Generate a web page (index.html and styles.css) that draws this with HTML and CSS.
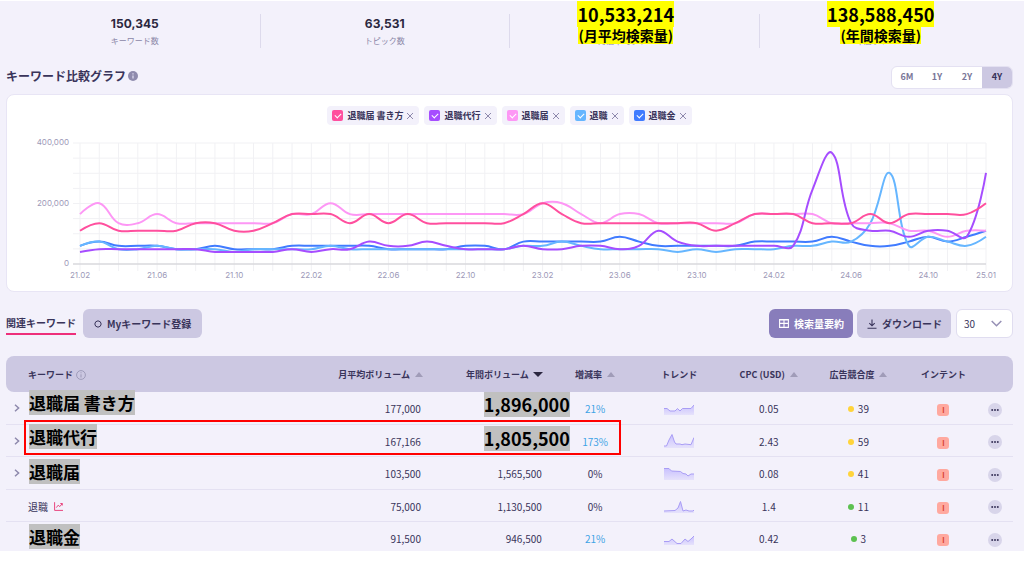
FILE: index.html
```html
<!DOCTYPE html>
<html lang="ja">
<head>
<meta charset="utf-8">
<title>キーワード</title>
<link rel="stylesheet" href="styles.css">
</head>
<body>
<svg class="defs" width="0" height="0" aria-hidden="true">
  <defs>
    <linearGradient id="fade" x1="0" y1="0" x2="0" y2="1"><stop offset="0" stop-color="#c9c1ff"/><stop offset="1" stop-color="#e6e2fb"/></linearGradient>
    <symbol id="chev" viewBox="0 0 6 8"><path d="M1 .8 4.6 4 1 7.2" fill="none" stroke="#8d88ac" stroke-width="1.5"/></symbol>
    <symbol id="x" viewBox="0 0 8 8"><path d="M1 1l6 6M7 1 1 7" stroke="#8d88ac" stroke-width="1" fill="none"/></symbol>
    <symbol id="dots" viewBox="0 0 14 14"><g fill="#39345a"><circle cx="4.2" cy="7" r="1"/><circle cx="7" cy="7" r="1"/><circle cx="9.8" cy="7" r="1"/></g></symbol>
  </defs>
</svg>
<main class="app">
  <section class="stats">
    <div class="stat"><strong>150,345</strong><span>キーワード数</span></div>
    <div class="stat"><strong>63,531</strong><span>トピック数</span></div>
    <div class="stat"><strong></strong><span>月間平均ボリューム</span>
      <div class="callout callout-left"><mark class="big">10,533,214</mark><mark class="small">(月平均検索量)</mark></div></div>
    <div class="stat"><strong></strong><span>年間ボリューム</span>
      <div class="callout"><mark class="big">138,588,450</mark><mark class="small">(年間検索量)</mark></div></div>
  </section>

  <section class="graph">
    <header class="graph-head">
      <h2>キーワード比較グラフ</h2>
      <svg class="info" width="10" height="10" viewBox="0 0 10 10"><circle cx="5" cy="5" r="5" fill="#8f8bad"/><path d="M5 2.2v1.2M5 4.4v3.2" stroke="#dcd9ee" stroke-width="1.3"/></svg>
      <div class="range">
        <button>6M</button><button>1Y</button><button>2Y</button><button class="on">4Y</button>
      </div>
    </header>
    <div class="card">
      <div class="legend">
        <div class="chip"><label><input type="checkbox" class="hot" checked>退職届 書き方</label><button aria-label="削除"><svg width="8" height="8"><use href="#x"/></svg></button></div>
        <div class="chip"><label><input type="checkbox" class="purple" checked>退職代行</label><button aria-label="削除"><svg width="8" height="8"><use href="#x"/></svg></button></div>
        <div class="chip"><label><input type="checkbox" class="pink" checked>退職届</label><button aria-label="削除"><svg width="8" height="8"><use href="#x"/></svg></button></div>
        <div class="chip"><label><input type="checkbox" class="sky" checked>退職</label><button aria-label="削除"><svg width="8" height="8"><use href="#x"/></svg></button></div>
        <div class="chip"><label><input type="checkbox" class="blue" checked>退職金</label><button aria-label="削除"><svg width="8" height="8"><use href="#x"/></svg></button></div>
      </div>
      <svg id="chart" class="chart"></svg>
    </div>
  </section>

  <section class="toolbar">
    <a class="tab" href="#related">関連キーワード</a>
    <button class="btn"><svg width="8" height="8" viewBox="0 0 8 8"><path d="M4 .8 6.3 1.8 7.2 4 6.3 6.2 4 7.2 1.7 6.2 .8 4 1.7 1.8z" fill="none" stroke="#39345a"/></svg>Myキーワード登録</button>
    <span class="spacer"></span>
    <button class="btn primary"><svg width="10" height="9" viewBox="0 0 10 9"><path d="M.6.6h8.8v7.8H.6zM.6 4.4h8.8M5 .6v7.8M.6 1h8.8" fill="none" stroke="#fff" stroke-width="1.1"/></svg>検索量要約</button>
    <button class="btn download"><svg width="10" height="10" viewBox="0 0 10 10"><path d="M5 .4v6.2M2.3 4.2 5 6.8l2.7-2.6M.5 9.2h9" fill="none" stroke="#39345a" stroke-width="1.1"/></svg>ダウンロード</button>
    <div class="select"><select aria-label="表示件数"><option>30</option></select><svg width="11" height="7" viewBox="0 0 11 7"><path d="M.7.9 5.5 5.8 10.3.9" fill="none" stroke="#9690b5" stroke-width="1.5"/></svg></div>
  </section>

  <section class="table-wrap" id="related">
    <table>
      <colgroup><col class="c-name"><col class="c-avg"><col class="c-year"><col class="c-rate"><col class="c-wide"><col class="c-cpc"><col class="c-wide"><col class="c-intent"><col class="c-more"></colgroup>
      <thead>
        <tr>
          <th class="name">キーワード<svg class="info-line" width="10" height="10" viewBox="0 0 10 10"><circle cx="5" cy="5" r="4.4" fill="none" stroke="#9b97b6" stroke-width=".9"/><path d="M5 2.3v1M5 4.3v3.2" stroke="#9b97b6"/></svg></th>
          <th class="avg">月平均ボリューム<i class="up"></i></th>
          <th class="year">年間ボリューム<i class="down"></i></th>
          <th>増減率<i class="up"></i></th>
          <th>トレンド</th>
          <th>CPC (USD)<i class="up"></i></th>
          <th>広告競合度<i class="up"></i></th>
          <th>インテント</th>
          <th></th>
        </tr>
      </thead>
      <tbody>
        <tr>
          <td class="name"><svg class="chev" width="6" height="8"><use href="#chev"/></svg><mark class="note note-up">退職届 書き方</mark></td>
          <td class="avg">177,000</td><td class="year"><mark class="value">1,896,000</mark></td><td class="gain">21%</td>
          <td><svg class="spark" width="30" height="16"><path class="area" d="M0 7.5H3L6 10H11L13.5 7.5 16 10 18.5 7.5H27L30 4V14H0z"/><path class="line" d="M0 7.5H3L6 10H11L13.5 7.5 16 10 18.5 7.5H27L30 4"/></svg></td>
          <td>0.05</td><td><i class="dot"></i>39</td><td><span class="intent">I</span></td><td><button class="more" aria-label="メニュー"><svg width="14" height="14"><use href="#dots"/></svg></button></td>
        </tr>
        <tr>
          <td class="name"><svg class="chev" width="6" height="8"><use href="#chev"/></svg><mark class="note note-mid">退職代行</mark></td>
          <td class="avg">167,166</td><td class="year"><mark class="value value-low">1,805,500</mark></td><td class="gain">173%</td>
          <td><svg class="spark" width="30" height="16"><path class="area" d="M0 12H2.5L5 6 8 .5 10.5 8 12 10H16L18 10.7 21 10 27 10.7 30 3.5V14H0z"/><path class="line" d="M0 12H2.5L5 6 8 .5 10.5 8 12 10H16L18 10.7 21 10 27 10.7 30 3.5"/></svg></td>
          <td>2.43</td><td><i class="dot"></i>59</td><td><span class="intent">I</span></td><td><button class="more" aria-label="メニュー"><svg width="14" height="14"><use href="#dots"/></svg></button></td>
        </tr>
        <tr>
          <td class="name"><svg class="chev" width="6" height="8"><use href="#chev"/></svg><mark class="note">退職届</mark></td>
          <td class="avg">103,500</td><td class="year">1,565,500</td><td>0%</td>
          <td><svg class="spark" width="30" height="16"><path class="area" d="M0 2.5H5L7.5 5 16.5 5.5 19 7.5 22 8 24 10 27 8H30V14H0z"/><path class="line" d="M0 2.5H5L7.5 5 16.5 5.5 19 7.5 22 8 24 10 27 8H30"/></svg></td>
          <td>0.08</td><td><i class="dot"></i>41</td><td><span class="intent">I</span></td><td><button class="more" aria-label="メニュー"><svg width="14" height="14"><use href="#dots"/></svg></button></td>
        </tr>
        <tr>
          <td class="name">退職<svg class="trend" width="9" height="9" viewBox="0 0 9 9"><path d="M.6.2v8.2H9M2.3 5.6 4.2 3.2 5.8 4.6 8.2 1.6M6.3 1.5h2v2" fill="none" stroke="#e8467f"/></svg></td>
          <td class="avg">75,000</td><td class="year">1,130,500</td><td>0%</td>
          <td><svg class="spark" width="30" height="16"><path class="area" d="M0 12 11 11.5 14 9 16.5 2.5 19 12 22 11 25 12H29L30 11V14H0z"/><path class="line" d="M0 12 11 11.5 14 9 16.5 2.5 19 12 22 11 25 12H29L30 11"/></svg></td>
          <td>1.4</td><td><i class="dot green"></i>11</td><td><span class="intent">I</span></td><td><button class="more" aria-label="メニュー"><svg width="14" height="14"><use href="#dots"/></svg></button></td>
        </tr>
        <tr>
          <td class="name"><mark class="note">退職金</mark></td>
          <td class="avg">91,500</td><td class="year">946,500</td><td class="gain">21%</td>
          <td><svg class="spark" width="30" height="16"><path class="area" d="M0 10.5H5L8 8 13 12.5H17L21 8 24 10.5 27 8 30 5V14H0z"/><path class="line" d="M0 10.5H5L8 8 13 12.5H17L21 8 24 10.5 27 8 30 5"/></svg></td>
          <td>0.42</td><td><i class="dot green"></i>3</td><td><span class="intent">I</span></td><td><button class="more" aria-label="メニュー"><svg width="14" height="14"><use href="#dots"/></svg></button></td>
        </tr>
      </tbody>
    </table>
    <div class="frame"></div>
  </section>
</main>
<script src="chart.js"></script>
</body>
</html>
```

FILE: styles.css
```css
* { box-sizing: border-box; }
body {
  margin: 0;
  background: #fff;
  color: #39345a;
  font-family: "Noto Sans CJK JP", sans-serif;
  font-size: 10px;
  line-height: 14px;
}
button, select, input { font: inherit; color: inherit; margin: 0; }
button { border: 0; background: none; padding: 0; cursor: pointer; }
svg { display: block; }
.defs { position: absolute; }
mark { color: #000; font-weight: 700; }

.app {
  margin-top: 1px;
  max-height: calc(100vh - 11px);
  overflow: hidden;
  background: #f3f1fb;
}

/* Totals */
.stats {
  display: grid;
  grid-template-columns: repeat(4, 1fr);
  padding: 13px 16px 0 10px;
}
.stat {
  position: relative;
  height: 34px;
  padding-top: 2px;
  display: flex;
  flex-direction: column;
  align-items: center;
  gap: 3px;
}
.stat + .stat { border-left: 1px solid #dddaec; }
.stat strong { height: 16px; font: 700 12px/16px Inter, sans-serif; color: #2b2740; }
.stat span { font-size: 8px; line-height: 12px; color: #8b87a8; white-space: nowrap; }
.callout {
  position: absolute;
  top: -13px;
  left: 0;
  right: 6px;
  display: flex;
  flex-direction: column;
  align-items: center;
}
.callout-left { right: 17px; }
.callout mark { background: #ff0; white-space: nowrap; }
.big { font-size: 18px; line-height: 25px; padding-top: 1px; height: 26px; }
.small { font-size: 14px; line-height: 17px; }

/* Graph */
.graph { padding: 18px 11px 0 6px; }
.graph-head { display: flex; align-items: center; height: 22px; }
h2 { margin: 0 0 2px; font-size: 12px; line-height: 18px; font-weight: 700; }
.info { margin: 0 0 2px 2px; }
.range {
  margin-left: auto;
  display: flex;
  border: 1px solid #e4e1f2;
  border-radius: 6px;
  background: #fff;
  overflow: hidden;
}
.range button { width: 30px; height: 21px; font-size: 9px; font-weight: 700; color: #7b7799; }
.range .on { background: #ccc8e2; color: #39345a; }
.card {
  margin-top: 6px;
  padding-top: 11px;
  background: #fff;
  border: 1px solid #e8e5f5;
  border-radius: 8px;
}
.legend { display: flex; justify-content: center; gap: 5px; }
.chip {
  display: flex;
  align-items: center;
  gap: 3px;
  height: 19px;
  padding: 0 5px;
  border-radius: 4px;
  background: #f3f1fb;
  font-size: 9px;
  font-weight: 700;
  color: #39345a;
}
.chip label { display: flex; align-items: center; gap: 4px; }
.chip input {
  appearance: none;
  position: relative;
  width: 11px;
  height: 11px;
  border-radius: 2px;
}
.chip input::after {
  content: "";
  position: absolute;
  left: 3px;
  top: 3px;
  width: 5px;
  height: 3px;
  border: solid #fff;
  border-width: 0 0 1px 1px;
  transform: rotate(-45deg);
}
.hot { background: #ff4f9e; }
.purple { background: #a64dff; }
.pink { background: #fd97f5; }
.sky { background: #66b6ff; }
.blue { background: #407bff; }
.chart { width: 100%; height: 156px; margin-top: 10px; }
.chart text { font: 8px Inter, sans-serif; fill: #9d99b8; }

/* Toolbar */
.toolbar {
  display: flex;
  align-items: center;
  padding: 17px 11px 18px 6px;
  gap: 4px;
}
.tab {
  margin-right: 3px;
  padding-bottom: 1px;
  border-bottom: 2px solid #ee2f7b;
  color: #39345a;
  font-weight: 700;
  line-height: 19px;
  text-decoration: none;
}
.spacer { flex: 1; }
.btn {
  display: flex;
  align-items: center;
  gap: 5px;
  height: 29px;
  padding: 0 11px;
  border-radius: 6px;
  background: #ccc8e2;
  font-weight: 700;
}
.primary { background: #887dbb; color: #fff; padding: 0 9px 0 10px; }
.download { padding: 0 9px 0 10px; }
.select { position: relative; margin-left: 1px; }
.select select {
  appearance: none;
  width: 57px;
  height: 29px;
  padding: 0 7px;
  border: 1px solid #e0ddf0;
  border-radius: 6px;
  background: #fff;
}
.select svg { position: absolute; right: 11px; top: 11px; pointer-events: none; }

/* Table */
.table-wrap { position: relative; margin: 0 11px 0 6px; }
table { width: 100%; table-layout: fixed; border-collapse: separate; border-spacing: 0; }
.c-name { width: 29.2%; }
.c-avg { width: 12.9%; }
.c-year { width: 13.1%; }
.c-rate { width: 6.6%; }
.c-wide { width: 10.1%; }
.c-cpc { width: 7.7%; }
.c-intent { width: 6.8%; }
.c-more { width: 3.5%; }
th {
  height: 36px;
  padding: 1px 0 0;
  background: #ccc8e2;
  font-size: 9px;
  font-weight: 700;
  color: #39345a;
  white-space: nowrap;
}
th:first-child { border-radius: 8px 0 0 8px; }
th:last-child { border-radius: 0 8px 8px 0; }
td {
  position: relative;
  height: 32px;
  padding: 2px 0 0;
  border-bottom: 1px solid #e4e1f2;
  text-align: center;
  white-space: nowrap;
}
tbody tr:nth-child(odd) td { height: 33px; }
.name { padding-left: 22px; text-align: left; }
th.avg { text-align: right; padding-right: 7px; }
td.avg { text-align: right; padding-right: 9px; }
th.year { text-align: right; padding-right: 19px; }
td.year { text-align: right; padding-right: 20px; }
.gain { color: #3ea3e6; }
.up, .down {
  display: inline-block;
  margin-left: 5px;
  vertical-align: 1px;
  border: solid transparent;
}
.up { border-width: 0 4px 5px; border-bottom-color: #a09cb8; }
.down { border-width: 5px 5px 0; border-top-color: #2b2740; margin-left: 4px; }
.info-line { display: inline-block; margin-left: 3px; vertical-align: -2px; }
.chev { position: absolute; left: 8px; top: 12px; }
.trend { display: inline-block; margin-left: 6px; vertical-align: 0; }
.note, .value {
  position: absolute;
  background: #c0c0c0;
  font-size: 18px;
  line-height: 25px;
}
.note { left: 23px; top: 2px; font-size: 17px; }
.note-up { top: -2px; }
.note-mid { top: -1px; }
.value { right: -8px; top: 0; }
.value-low { top: 1px; }
.spark { margin: 0 auto; }
.area { fill: url(#fade); }
.line { fill: none; stroke: #a99df5; stroke-width: 1; }
.dot {
  display: inline-block;
  width: 6px;
  height: 6px;
  margin-right: 4px;
  border-radius: 50%;
  background: #ffd43b;
  vertical-align: 1px;
}
.green { background: #5cc150; }
.intent {
  display: inline-block;
  width: 12px;
  height: 12px;
  border-radius: 3px;
  background: #ffa99f;
  color: #d63c2c;
  font-size: 7px;
  line-height: 12px;
  font-weight: 700;
  vertical-align: middle;
}
.more {
  width: 14px;
  height: 14px;
  border-radius: 50%;
  background: #d8d5ea;
  vertical-align: middle;
}
.frame {
  position: absolute;
  left: 1.8%;
  top: 64px;
  width: 59.3%;
  height: 35px;
  border: 2px solid #f00;
}
```

FILE: chart.js
```js
// Monthly volumes in thousands, from 21.02 to 25.01.
const series = [
  ["#407bff", [60,74,60,60,60,49,49,60,49,49,49,60,60,60,60,60,49,49,49,49,60,60,49,74,74,74,74,74,90,74,60,60,60,60,60,74,74,74,74,90,74,60,60,74,90,74,90,110]],
  ["#66b6ff", [60,74,49,49,60,49,49,49,40,49,49,49,49,60,49,49,49,49,49,49,49,49,49,60,60,74,60,49,49,49,49,40,49,40,49,49,49,60,60,74,74,135,301,60,90,74,60,90]],
  ["#fd97f5", [165,201,135,135,165,135,135,135,135,135,135,165,165,201,165,165,165,165,165,165,165,165,165,165,201,201,165,135,165,165,135,135,135,135,135,165,165,165,165,135,135,135,135,110,110,90,110,110]],
  ["#a64dff", [40,49,49,49,49,49,49,40,40,40,40,49,40,49,49,74,60,60,74,60,49,49,49,60,49,49,60,60,49,60,110,74,60,60,60,60,60,60,246,368,135,110,110,90,110,110,90,301]],
  ["#ff4f9e", [110,135,110,110,110,110,135,135,110,110,135,165,165,165,135,165,135,165,135,135,135,135,135,165,201,165,135,135,135,135,135,135,135,110,135,165,165,165,135,135,135,165,135,165,165,165,165,201]]
];
const labels = [[0,"21.02"],[4,"21.06"],[8,"21.10"],[12,"22.02"],[16,"22.06"],[20,"22.10"],[24,"23.02"],[28,"23.06"],[32,"23.10"],[36,"24.02"],[40,"24.06"],[44,"24.10"],[47,"25.01"]];
const tension = 0.4;

function smooth(p) {
  let d = `M${p[0]}`, from = p[0];
  for (let i = 1; i < p.length; i++) {
    const prev = p[i - 1], cur = p[i], next = p[i + 1];
    let into = cur, out = cur;
    if (next) {
      const lp = Math.hypot(cur[0] - prev[0], cur[1] - prev[1]);
      const ln = Math.hypot(next[0] - cur[0], next[1] - cur[1]);
      into = [0, 1].map(k => cur[k] - (next[k] - prev[k]) * tension * lp / (lp + ln));
      out = [0, 1].map(k => cur[k] + (next[k] - prev[k]) * tension * ln / (lp + ln));
    }
    d += `C${from} ${into} ${cur}`;
    from = out;
  }
  return d;
}

function draw() {
  const svg = document.getElementById("chart");
  const left = 73, right = svg.clientWidth - 26, top = 8, base = 129;
  const x = i => left + (right - left) * i / 47;
  const y = v => base - (base - top) * v / 400;
  let out = "";
  for (let i = 0; i < 48; i++) out += `<path d="M${x(i)} ${top}V${base + 7}" stroke="#f1f1f4"/>`;
  for (let v = 50; v <= 400; v += 50) out += `<path d="M${left - 7} ${y(v)}H${right}" stroke="#f1f1f4"/>`;
  out += `<path d="M${left - 7} ${base}H${right}" stroke="#d9d9dc" stroke-width="1.5"/>`;
  for (const [color, values] of series)
    out += `<path d="${smooth(values.map((v, i) => [x(i), y(v)]))}" fill="none" stroke="${color}" stroke-width="2"/>`;
  for (const [v, t] of [[400, "400,000"], [200, "200,000"], [0, "0"]])
    out += `<text x="${left - 11}" y="${y(v) + 2}" text-anchor="end">${t}</text>`;
  for (const [i, t] of labels) out += `<text x="${x(i)}" y="${base + 14}" text-anchor="middle">${t}</text>`;
  svg.innerHTML = out;
}
draw();
addEventListener("resize", draw);
```
